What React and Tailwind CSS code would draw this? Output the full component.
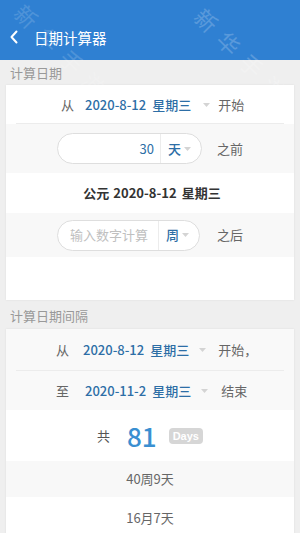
import React from "react";

const font = { fontFamily: '"Noto Sans CJK SC", "Noto Sans", sans-serif' };

function Caret() {
  return (
    <svg width="7" height="4" viewBox="0 0 7 4" className="shrink-0">
      <path d="M0 0 L7 0 L3.5 4 Z" fill="#d4d4d4" />
    </svg>
  );
}

function DateRow({ lead, date, week, tail, bg, border, leadMl, dateMl, caretMl, tailMl, h }) {
  return (
    <div className={`relative flex items-center ${bg} ${h}`}>
      <div className="flex items-center text-[13px] text-[#666]" style={{ marginLeft: leadMl }}>
        <span>{lead}</span>
        <span className="font-medium text-[#2d6ea6]" style={{ marginLeft: dateMl }}>
          {date}
        </span>
        <span className="ml-[6px] font-medium text-[#2d6ea6]">{week}</span>
        <span style={{ marginLeft: caretMl }}>
          <Caret />
        </span>
        <span style={{ marginLeft: tailMl }}>{tail}</span>
      </div>
      {border && <div className="absolute bottom-0 left-[10px] right-[10px] h-px bg-[#ececec]" />}
    </div>
  );
}

function Pill({ value, placeholder, unit, leftW, totalW, h }) {
  return (
    <div
      className="flex items-stretch rounded-full border border-[#dedede] bg-white"
      style={{ width: totalW, height: h }}
    >
      <div
        className="flex items-center justify-end pr-[6px] text-[13px]"
        style={{ width: leftW }}
      >
        {value ? (
          <span className="text-[#2d6ea6]">{value}</span>
        ) : (
          <span className="w-full pl-[12px] text-left text-[#c0c0c0]">{placeholder}</span>
        )}
      </div>
      <div className="w-px bg-[#ececec]" />
      <div className="flex flex-1 items-center pl-[7px] text-[13px] text-[#2d6ea6]">
        <span className="font-medium">{unit}</span>
        <span className="ml-[3px]">
          <Caret />
        </span>
      </div>
    </div>
  );
}

export default function App() {
  return (
    <div className="relative h-[533px] w-[300px] overflow-hidden bg-[#efefef]" style={font}>
      {/* header */}
      <div className="flex h-[60px] items-end bg-[#2f80d2] pb-[12px]">
        <svg width="10" height="14" viewBox="0 0 10 14" className="ml-[9px] mb-[4px]">
          <path d="M7.5 1.5 L2.5 7 L7.5 12.5" fill="none" stroke="#fff" strokeWidth="2" strokeLinecap="round" strokeLinejoin="round" />
        </svg>
        <span className="ml-[15px] text-[14.5px] leading-[20px] text-white">日期计算器</span>
      </div>

      {/* section 1 */}
      <div className="flex h-[25px] items-center pl-[10px] text-[13px] text-[#999]">计算日期</div>
      <div className="mx-[6px] h-[215px] bg-white shadow-[0_0_2px_rgba(0,0,0,0.08)]">
        <DateRow
          lead="从"
          date="2020-8-12"
          week="星期三"
          tail="开始"
          bg="bg-white"
          border
          leadMl={55}
          dateMl={11}
          caretMl={12}
          tailMl={8}
          h="h-[39px]"
        />
        <div className="flex h-[49px] items-center bg-[#f8f8f8] pl-[51px]">
          <Pill value="30" unit="天" leftW={102} totalW={145} h={31} />
          <span className="ml-[15px] text-[13px] text-[#666]">之前</span>
        </div>
        <div className="flex h-[40px] items-center justify-center pl-[4px] text-[13px] font-semibold text-[#333]">
          <span>公元</span>
          <span className="ml-[4px]">2020-8-12</span>
          <span className="ml-[5px]">星期三</span>
        </div>
        <div className="flex h-[44px] items-center bg-[#f8f8f8] pl-[51px]">
          <Pill placeholder="输入数字计算" unit="周" leftW={100} totalW={143} h={31} />
          <span className="ml-[17px] text-[13px] text-[#666]">之后</span>
        </div>
      </div>

      {/* section 2 */}
      <div className="flex h-[29px] items-center pl-[10px] pt-[2px] text-[13px] text-[#999]">计算日期间隔</div>
      <div className="mx-[6px] h-[210px] bg-white shadow-[0_0_2px_rgba(0,0,0,0.08)]">
        <DateRow
          lead="从"
          date="2020-8-12"
          week="星期三"
          tail="开始，"
          bg="bg-[#f9f9f9]"
          border
          leadMl={50}
          dateMl={14}
          caretMl={10}
          tailMl={12}
          h="h-[42px]"
        />
        <DateRow
          lead="至"
          date="2020-11-2"
          week="星期三"
          tail="结束"
          bg="bg-[#f9f9f9]"
          leadMl={50}
          dateMl={16}
          caretMl={10}
          tailMl={13}
          h="h-[39px]"
        />
        <div className="flex h-[51px] items-center pl-[91px]">
          <span className="text-[13px] text-[#555]">共</span>
          <span className="ml-[17px] text-[26px] font-medium leading-none text-[#3a8fd1]">81</span>
          <span className="ml-[12px] rounded-[4px] bg-[#d6d6d6] px-[4px] text-[11px] font-bold leading-[16px] text-white" style={{ fontFamily: '"Liberation Sans", Arial, sans-serif' }}>
            Days
          </span>
        </div>
        <div className="flex h-[36px] items-center justify-center bg-[#f8f8f8] text-[13px] text-[#666]">40周9天</div>
        <div className="flex h-[42px] items-center justify-center pb-[1px] text-[13px] text-[#666]">16月7天</div>
      </div>

      {/* watermark */}
      <div
        aria-hidden="true"
        className="pointer-events-none absolute left-[207px] top-[4px] rotate-[45deg] whitespace-nowrap text-[22px] leading-[22px] tracking-[10px] text-white opacity-20"
        style={{ transformOrigin: "0 0" }}
      >
        新华手游
      </div>
      <div
        aria-hidden="true"
        className="pointer-events-none absolute left-[27px] top-[0px] rotate-[45deg] whitespace-nowrap text-[22px] leading-[22px] tracking-[10px] text-white opacity-15"
        style={{ transformOrigin: "0 0" }}
      >
        新华手游
      </div>
    </div>
  );
}
